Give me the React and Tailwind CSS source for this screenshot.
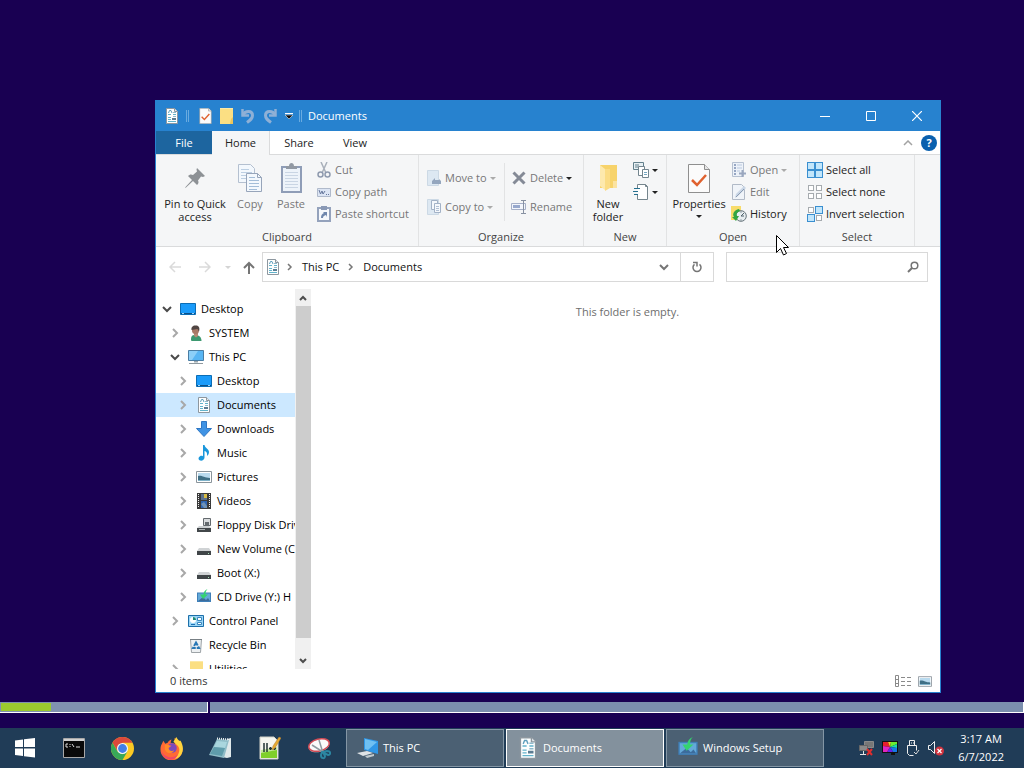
function Svg({ w = 16, h = 16, box, children }) {
  return (
    <svg width={w} height={h} viewBox={box || `0 0 ${w} ${h}`} fill="none" className="shrink-0" aria-hidden="true">
      {children}
    </svg>
  );
}

/* SMALL ICONS */

function DocumentIcon({ w = 16, h = 16 }) {
  return (
    <Svg w={w} h={h} box="0 0 16 16">
      <path d="M2.5.5h8l3 3v12h-11z" fill="#fdfefe" stroke="#8d979f" />
      <path d="M10.5.5v3h3" fill="#e4e9ed" stroke="#8d979f" />
      <path d="M4 6.500h3M9 6.500h3M4 9.500h3M4 11.500h3M4 13.500h8" stroke="#62b3cc" />
      <path d="M4.500 5l1-2.500H7L8 5" stroke="#5f9fbd" />
      <path d="M9 4.500h3M9 8.500h3" stroke="#8fb9cc" />
      <path d="M8 10h4v2H8z" fill="#5b7c92" />
    </Svg>
  );
}

function CheckPageIcon({ w = 13, h = 16 }) {
  return (
    <Svg w={w} h={h} box="0 0 22 29">
      <path d="M.5.5h16l5 5v23H.5z" fill="#fbfbfb" stroke="#8f8f8f" />
      <path d="M16.500.5v5h5" fill="#e6e6e6" stroke="#8f8f8f" />
      <path d="M4 16l5 5 9-10" stroke="#e0622f" strokeWidth="2.500" />
    </Svg>
  );
}

function FolderIcon({ w = 13, h = 16 }) {
  return (
    <Svg w={w} h={h} box="0 0 13 16">
      <path d="M0 0h13v16H0z" fill="#fbdf83" />
      <path d="M0 0h13v1H0z" fill="#fce9a8" />
      <path d="M11 11l2-2v7h-3z" fill="#ecc55c" />
    </Svg>
  );
}

function UndoIcon() {
  return (
    <Svg w={14} h={16}>
      <path d="M1.500 1v6.500H8" stroke="#8fb0d6" strokeWidth="2.500" />
      <path d="M2 7C4 2.500 11.500 2 11.500 7.500c0 3-2 4.500-5.500 7" stroke="#8fb0d6" strokeWidth="3" />
    </Svg>
  );
}

function RedoIcon() {
  return (
    <Svg w={14} h={16}>
      <path d="M12.500 1v6.500H6" stroke="#8fb0d6" strokeWidth="2.500" />
      <path d="M12 7C10 2.500 2.500 2 2.500 7.500c0 3 2 4.500 5.500 7" stroke="#8fb0d6" strokeWidth="3" />
    </Svg>
  );
}

function MonitorIcon() {
  return (
    <Svg>
      <path d="M.5 2.500h15v11H.5z" fill="#1a9bfa" stroke="#0b6db5" />
      <path d="M1 12.500h14" stroke="#0c4f86" />
      <path d="M2 12.500h2M12 12.500h2" stroke="#9fd4f7" />
    </Svg>
  );
}

function UserIcon() {
  return (
    <Svg>
      <path d="M3 15c0-4 1-5 4-5 4 0 6.500 2 6.500 6H5c-1 0-2 0-2-1z" fill="#3d9970" />
      <path d="M6 8h4v3l-2 1.500L6 11z" fill="#b58a74" />
      <circle cx="7.500" cy="5.500" r="3.500" fill="#a87966" />
      <path d="M3.500 5C3 1.500 5.500 0 8 .5c3 0 4 2.500 3 6L9.500 4z" fill="#514643" />
    </Svg>
  );
}

function ComputerIcon() {
  return (
    <Svg>
      <path d="M.5 1.500h15v10H.5z" fill="#58b5f3" stroke="#4a7da3" />
      <path d="M1 2h9L4 11H1z" fill="#8ccff8" />
      <path d="M6 12h4v1.500H6z" fill="#9aa6ad" />
      <path d="M1 14.500h14" stroke="#8f999f" />
    </Svg>
  );
}

function DownloadIcon() {
  return (
    <Svg>
      <path d="M5.500.5h5v7h5L8 15.500.5 7.500h5z" fill="#3f93e4" stroke="#2f77c4" />
    </Svg>
  );
}

function MusicIcon() {
  return (
    <Svg>
      <path d="M7 0h1.500c.5 3 4.500 4 4.500 7 0 2-1 3-2 4 .5-3-.5-4.500-2.500-5v6.500C8.500 15 6 16 4 15.500c-2-.8-2-3.500 0-4.300 1-.5 2-.4 3 0z" fill="#1a97dc" />
    </Svg>
  );
}

function PictureIcon({ w = 16, h = 12 }) {
  return (
    <Svg w={w} h={h} box="0 0 16 12">
      <path d="M.5.5h15v11H.5z" fill="#fff" stroke="#8a949b" />
      <path d="M2 2h12v8H2z" fill="#b9daee" />
      <path d="M2 9V5c4-1 6 2 12 2v2z" fill="#3f6f85" />
      <path d="M2 9h12v1H2z" fill="#7fb2c9" />
    </Svg>
  );
}

function VideoIcon() {
  return (
    <Svg>
      <path d="M1 0h14v16H1z" fill="#3a3a3a" />
      <path d="M5 1h6v6H5z" fill="#5c718c" />
      <path d="M5 8h6v7H5z" fill="#2d65b4" />
      <path d="M8 1h3v4H8z" fill="#d9bd45" />
      <path d="M5 11l3-2 3 4v2H8z" fill="#7092b5" />
      <path d="M2.500 1v14M13.500 1v14" stroke="#f2f2f2" strokeDasharray="1 1" />
    </Svg>
  );
}

function FloppyDriveIcon() {
  return (
    <Svg>
      <path d="M7.500 1.500h7v7h-7z" fill="#d8dbdd" stroke="#646a6e" />
      <path d="M9 5h4v3H9z" fill="#646a6e" />
      <path d="M3 9h10l2 2H1z" fill="#ccd0d2" />
      <path d="M1 11h14v4H1z" fill="#42474a" />
      <path d="M3 12.500h6" stroke="#aab0b2" />
    </Svg>
  );
}

function DriveIcon() {
  return (
    <Svg>
      <path d="M3 7h10l2 3H1z" fill="#d0d3d5" />
      <path d="M1 10h14v4H1z" fill="#404548" />
      <path d="M12 12h1v1h-1z" fill="#a6e4b5" />
    </Svg>
  );
}

function SetupIcon({ w = 16, h = 16 }) {
  return (
    <Svg w={w} h={h} box="0 0 16 16">
      <path d="M1 3.500h14v9.500H1z" fill="#3f7fb8" />
      <path d="M2 4.500h12v7.500H2z" fill="#63a9d8" />
      <path d="M2 12l5-4 3 3 2-2 2 3z" fill="#3c6c9c" />
      <path d="M11.500 0C9 1 7.500 3 7.500 5.500H4L7 10l5-4.500H9.500C9.500 3 10 1.500 11.500 0z" fill="#34d36f" />
    </Svg>
  );
}

function ControlPanelIcon() {
  return (
    <Svg>
      <path d="M.5 2.500h15v11H.5z" fill="#9ad5f6" stroke="#1d6fa9" />
      <circle cx="5" cy="7" r="3" fill="#fff" />
      <path d="M5 4v3h3a3 3 0 00-3-3z" fill="#1e8a75" />
      <path d="M9.500 4.500h4v3h-4zM9.500 9.500h4v2h-4z" fill="#fff" stroke="#3a87bf" />
      <path d="M3 11.500h4" stroke="#1e70b1" />
    </Svg>
  );
}

function RecycleIcon() {
  return (
    <Svg>
      <path d="M2.500 2.500h11l-1 13h-9z" fill="#edf0f2" stroke="#9da3a7" />
      <path d="M2 2.500h12" stroke="#777f84" />
      <path d="M8 5.500L5 11h6z" stroke="#2877b5" strokeWidth="2" strokeDasharray="4 1" />
    </Svg>
  );
}

function Chevron({ open }) {
  return (
    <Svg w={10} h={10}>
      <path d={open ? "M1 3l4 4 4-4" : "M3 1l4 4-4 4"} stroke={open ? "#4a4a4a" : "#a8a8a8"} strokeWidth="2" />
    </Svg>
  );
}

function Caret({ light }) {
  return (
    <Svg w={6} h={3}>
      <path d="M0 0h6L3 3z" fill={light ? "#aaa" : "#222"} />
    </Svg>
  );
}

/* RIBBON ICONS */

function PinIcon() {
  return (
    <Svg w={22} h={22}>
      <path d="M13 1l8 8-2 1-2-.5-3 4c1 2 .5 3-1 4.500L9 14l-7 6.500L1 21l.5-1L8 13 4 9c1.500-1.500 3-2 5-1l4-3.500-.5-2z" fill="#8d9195" />
    </Svg>
  );
}

function CopyIcon() {
  return (
    <Svg w={25} h={29}>
      <path d="M.5.5h12l4 4v14H.5z" fill="#f3f8fd" stroke="#b4c0d0" />
      <path d="M3 5.500h8M3 8.500h11M3 11.500h11M3 14.500h5" stroke="#bccfe3" />
      <path d="M8.500 9.500h11l4 4v14h-15z" fill="#f3f8fd" stroke="#97a5ba" />
      <path d="M19.500 9.500v4h4" stroke="#97a5ba" />
      <path d="M11 13.500h6M11 16.500h10M11 19.500h10M11 22.500h10M11 25.500h8" stroke="#a3bdd8" />
    </Svg>
  );
}

function PasteIcon() {
  return (
    <Svg w={21} h={30}>
      <path d="M1 4h19v25H1z" fill="#edf3fa" stroke="#8f9db7" strokeWidth="2" />
      <path d="M5 3h3c0-4 5-4 5 0h3v3H5z" fill="#9299a3" />
      <path d="M4 9.500h13M4 12.500h13M4 15.500h13M4 18.500h13M4 21.500h13M4 24.500h13" stroke="#c9d5e4" />
    </Svg>
  );
}

function CutIcon() {
  return (
    <Svg w={14} h={16}>
      <path d="M4 0l5 11M10 0L5 11" stroke="#a9b0ba" strokeWidth="1.500" />
      <circle cx="3.500" cy="12.500" r="2.500" stroke="#8f9aae" strokeWidth="1.500" />
      <circle cx="10.500" cy="12.500" r="2.500" stroke="#8f9aae" strokeWidth="1.500" />
    </Svg>
  );
}

function PathIcon() {
  return (
    <Svg w={14} h={9}>
      <path d="M.5.5h13v8H.5z" fill="#dce5f4" stroke="#b0bacb" />
      <path d="M2 2l1.500 4L5 3l1 3 2-3M9 6.500h1M11 6.500h1" stroke="#66779c" />
    </Svg>
  );
}

function ShortcutIcon() {
  return (
    <Svg w={14} h={16}>
      <path d="M1 2h12v13H1z" fill="#f5f8fc" stroke="#94a2bc" strokeWidth="2" />
      <path d="M4 0h6v4H4z" fill="#8a99b5" />
      <path d="M4 12c0-3 1-4 3-5L6 6h4v5L9 9c-2 1-3 1-3 3z" fill="#6f87ad" />
    </Svg>
  );
}

function MoveIcon({ copy }) {
  return (
    <Svg w={14} h={16}>
      <path d="M.5.5h11v15H.5z" fill="#dde8f2" stroke="#ccd9e5" />
      {copy ? (
        <>
          <path d="M4.500 1.500h6v9h-6z" fill="#f5f8fc" stroke="#a3b2c7" />
          <path d="M7.500 4.500h6v9h-6z" fill="#f5f8fc" stroke="#a3b2c7" />
          <path d="M9 7.500h3M9 9.500h3M9 11.500h3" stroke="#b1c0d4" />
        </>
      ) : (
        <path d="M5 14v-3l3-3v2h4v-1l2 2v3z" fill="#94a6be" />
      )}
    </Svg>
  );
}

function DeleteIcon() {
  return (
    <Svg w={14} h={14}>
      <path d="M1.500 1.500l11 11M12.500 1.500l-11 11" stroke="#848a96" strokeWidth="3" />
    </Svg>
  );
}

function RenameIcon() {
  return (
    <Svg w={16} h={16}>
      <path d="M.5 4.500h14v6H.5z" fill="#f3f6fc" stroke="#a6b0c8" />
      <path d="M2 6h7v3H2z" fill="#97a8cd" />
      <path d="M10 1.500h5M12.500 1.500v13M10 14.500h5" stroke="#8791a2" />
    </Svg>
  );
}

function NewFolderIcon() {
  return (
    <Svg w={18} h={28}>
      <path d="M1 1h17v23H1z" fill="#f7d36b" />
      <path d="M1 1l5 4v21l-5-4z" fill="#fde9ad" />
      <path d="M6 5h5v19l-5 3z" fill="#fbdc84" />
      <path d="M14 17h4v7h-4z" fill="#fbe3a1" />
    </Svg>
  );
}

function NewItemIcon() {
  return (
    <Svg w={16} h={16}>
      <path d="M.5.5h10v7H.5z" fill="#e8f0f4" stroke="#63808c" />
      <path d="M2 3h4M2 5h3" stroke="#63808c" />
      <path d="M5.500 4.500h6v9h-6z" fill="#fff" stroke="#73858e" />
      <path d="M9.500 7.500h6v8h-6z" fill="#fff" stroke="#73858e" />
      <path d="M11 10.500h3M11 12.500h3" stroke="#75a6c0" />
    </Svg>
  );
}

function EasyAccessIcon() {
  return (
    <Svg w={16} h={16}>
      <path d="M4.500 4V.5h8l2 2v13h-10V10" fill="#fff" stroke="#75858d" />
      <path d="M12.500.5v2h2" stroke="#75858d" />
      <path d="M1 4.500h6M0 7.500h5M1 10.500h4" stroke="#26708f" />
    </Svg>
  );
}

function OpenIcon() {
  return (
    <Svg w={14} h={16}>
      <path d="M.5.5h11v14H.5z" fill="#edf2f9" stroke="#b6c1d1" />
      <path d="M2 3h2M2 6h2M2 9h2M2 12h2" stroke="#97a7c4" strokeWidth="2" />
      <path d="M5 3h5M5 6h5M5 9h3" stroke="#bac9df" />
      <path d="M10.500 8v7M7 11.500h7" stroke="#9aa7bf" strokeWidth="2" />
    </Svg>
  );
}

function EditIcon() {
  return (
    <Svg w={14} h={16}>
      <path d="M.5.5h9l3 3v12H.5z" fill="#f0f4f9" stroke="#b1bac7" />
      <path d="M3 14l1-4 8-8 2 2-8 8z" fill="#c9d6e6" />
      <path d="M4 13l8-8" stroke="#8b9cb3" />
    </Svg>
  );
}

function HistoryIcon() {
  return (
    <Svg w={16} h={16}>
      <path d="M0 0h10v14H0z" fill="#f8dc6b" />
      <circle cx="10" cy="10" r="5.300" fill="#e7edf0" stroke="#67757c" />
      <path d="M10 10l3-3M10 10h3M10 5.500v1M10 13.500v1" stroke="#51636c" />
      <path d="M8 3C3 4 1 8 3 11H1l4 4 3-5H6C5 8 6 6 9 5z" fill="#32a642" />
    </Svg>
  );
}

// filled lists which of the four squares are selected
function SquaresIcon({ filled }) {
  const cells = [[0, 0], [8, 0], [0, 8], [8, 8]];
  return (
    <Svg>
      {cells.map(([x, y], i) => {
        const on = filled.includes(i);
        const pad = on ? 0.5 : 1.5;
        return (
          <rect
            key={i}
            x={x + pad}
            y={y + pad}
            width={on ? 7 : 5}
            height={on ? 7 : 5}
            fill={on ? "#c2e6fb" : "#fff"}
            stroke={on ? "#3a8fd0" : "#a6abaf"}
          />
        );
      })}
    </Svg>
  );
}

/* RIBBON PARTS */

function BigButton({ icon, label, width, faded, caret }) {
  return (
    <button className={`flex flex-col items-center pt-[7px] leading-[13px] ${width} ${faded ? "text-[#777]" : "text-[#222]"}`}>
      <span className="mb-[3px] flex h-8 items-center">{icon}</span>
      <span>{label}</span>
      {caret && <span className="flex h-3 items-center"><Caret /></span>}
    </button>
  );
}

function SmallButton({ icon, label, faded, caret }) {
  return (
    <button className={`flex h-[22px] items-center gap-[3px] whitespace-nowrap ${faded ? "text-[#777]" : "text-[#222]"}`}>
      <span className="flex w-4 justify-center">{icon}</span>
      {label && <span>{label}</span>}
      {caret && <Caret light={caret === "light"} />}
    </button>
  );
}

function Group({ title, width, children }) {
  return (
    <section className={`flex shrink-0 flex-col border-r border-[#e2e3e4] ${width}`}>
      <div className="flex h-[74px]">{children}</div>
      <h2 className="text-center leading-4 text-[#444]">{title}</h2>
    </section>
  );
}

function Ribbon() {
  return (
    <div className="flex h-[92px] shrink-0 overflow-hidden border-b border-[#dadbdc] bg-[#f5f6f7]">
      <Group title="Clipboard" width="w-[263px]">
        <BigButton width="w-[78px]" icon={<PinIcon />} label={<>Pin to Quick<br />access</>} />
        <BigButton width="w-8" icon={<CopyIcon />} label="Copy" faded />
        <BigButton width="w-[50px]" icon={<PasteIcon />} label="Paste" faded />
        <div className="flex flex-col pt-1">
          <SmallButton icon={<CutIcon />} label="Cut" faded />
          <SmallButton icon={<PathIcon />} label="Copy path" faded />
          <SmallButton icon={<ShortcutIcon />} label="Paste shortcut" faded />
        </div>
      </Group>
      <Group title="Organize" width="w-[165px]">
        <div className="my-2 flex w-[86px] flex-col gap-[7px] border-r border-[#e2e3e4] pt-1 pl-[7px]">
          <SmallButton icon={<MoveIcon />} label="Move to" faded caret="light" />
          <SmallButton icon={<MoveIcon copy />} label="Copy to" faded caret="light" />
        </div>
        <div className="my-2 flex flex-col gap-[7px] pt-1 pl-[6px]">
          <SmallButton icon={<DeleteIcon />} label="Delete" faded caret="dark" />
          <SmallButton icon={<RenameIcon />} label="Rename" faded />
        </div>
      </Group>
      <Group title="New" width="w-[83px]">
        <BigButton width="w-12" icon={<NewFolderIcon />} label={<>New<br />folder</>} />
        <div className="flex flex-col pt-1 pl-px">
          <SmallButton icon={<NewItemIcon />} caret="dark" />
          <SmallButton icon={<EasyAccessIcon />} caret="dark" />
        </div>
      </Group>
      <Group title="Open" width="w-[133px]">
        <BigButton width="w-16" icon={<CheckPageIcon w={22} h={29} />} label="Properties" caret />
        <div className="flex flex-col pt-1">
          <SmallButton icon={<OpenIcon />} label="Open" faded caret="light" />
          <SmallButton icon={<EditIcon />} label="Edit" faded />
          <SmallButton icon={<HistoryIcon />} label="History" />
        </div>
      </Group>
      <Group title="Select" width="w-[115px]">
        <div className="flex flex-col pt-1 pl-[7px]">
          <SmallButton icon={<SquaresIcon filled={[0, 1, 2, 3]} />} label="Select all" />
          <SmallButton icon={<SquaresIcon filled={[]} />} label="Select none" />
          <SmallButton icon={<SquaresIcon filled={[1, 2]} />} label="Invert selection" />
        </div>
      </Group>
    </div>
  );
}

/* WINDOW PARTS */

function TitleDivider() {
  return <span className="h-3 w-[3px] border-x border-[#69abe0]" />;
}

function TitleBar() {
  return (
    <header className="flex h-[30px] shrink-0 items-center bg-[#2782cf] text-white">
      <div className="flex flex-1 items-center pl-2">
        <DocumentIcon />
        <span className="ml-[6px] flex"><TitleDivider /></span>
        <button aria-label="Properties" className="ml-[10px]"><CheckPageIcon /></button>
        <button aria-label="New folder" className="ml-2"><FolderIcon /></button>
        <button aria-label="Undo" className="ml-2"><UndoIcon /></button>
        <button aria-label="Redo" className="ml-2"><RedoIcon /></button>
        <button aria-label="Customize toolbar" className="ml-2">
          <Svg w={8} h={8}>
            <path d="M0 1.500h8" stroke="#fff" />
            <path d="M0 3h8L4 7z" fill="#111" stroke="#fff" strokeWidth=".5" />
          </Svg>
        </button>
        <span className="mr-[6px] ml-[6px] flex"><TitleDivider /></span>
        <h1>Documents</h1>
      </div>
      <button aria-label="Minimize" className="flex w-[46px] justify-center">
        <Svg w={10} h={10}><path d="M0 5.500h10" stroke="#fff" /></Svg>
      </button>
      <button aria-label="Maximize" className="flex w-[46px] justify-center">
        <Svg w={10} h={10}><path d="M.5.5h9v9h-9z" stroke="#fff" /></Svg>
      </button>
      <button aria-label="Close" className="flex w-[46px] justify-center">
        <Svg w={10} h={10}><path d="M0 0l10 10M10 0L0 10" stroke="#fff" strokeWidth="1.200" /></Svg>
      </button>
    </header>
  );
}

function TabBar() {
  return (
    <nav className="flex h-6 shrink-0 border-b border-[#dadbdc] bg-white text-[#222]">
      <button className="w-14 bg-[#1d659f] pt-px text-white">File</button>
      <button className="-mb-px w-[58px] border-r border-[#dadbdc] bg-[#f5f6f7]">Home</button>
      <button className="w-[58px] pt-px">Share</button>
      <button className="w-[54px] pt-px">View</button>
      <div className="ml-auto flex items-center gap-2 pr-[3px]">
        <button aria-label="Collapse ribbon">
          <Svg w={10} h={6}><path d="M1 5l4-4 4 4" stroke="#a3a3a3" strokeWidth="1.500" /></Svg>
        </button>
        <button aria-label="Help" className="h-4 w-4 rounded-full bg-[#0a60ae] font-bold leading-4 text-white">?</button>
      </div>
    </nav>
  );
}

function AddressRow() {
  return (
    <div className="flex h-[42px] shrink-0 items-start pt-[5px] pr-3 pl-1 text-[#111]">
      <button aria-label="Back" className="flex h-[30px] w-[30px] items-center justify-center">
        <Svg w={12} h={12}><path d="M12 6H1M6 1L1 6l5 5" stroke="#dadada" strokeWidth="1.500" /></Svg>
      </button>
      <button aria-label="Forward" className="flex h-[30px] w-[30px] items-center justify-center">
        <Svg w={12} h={12}><path d="M0 6h11M6 1l5 5-5 5" stroke="#dadada" strokeWidth="1.500" /></Svg>
      </button>
      <button aria-label="Recent locations" className="flex h-[30px] w-4 items-center justify-center">
        <Svg w={6} h={3}><path d="M0 0h6L3 3z" fill="#d4d4d4" /></Svg>
      </button>
      <button aria-label="Up" className="flex h-[30px] w-[26px] items-center justify-center">
        <Svg w={12} h={13}><path d="M6 13V2M1 7l5-5 5 5" stroke="#757575" strokeWidth="2" /></Svg>
      </button>
      <div className="flex h-[30px] flex-1 items-center border border-[#d9d9d9] bg-white pl-[2px]">
        <DocumentIcon />
        <span className="ml-[5px]"><Svg w={8} h={8}><path d="M2 1l3 3-3 3" stroke="#777" strokeWidth="1.500" /></Svg></span>
        <button className="ml-2">This PC</button>
        <span className="ml-2"><Svg w={8} h={8}><path d="M2 1l3 3-3 3" stroke="#777" strokeWidth="1.500" /></Svg></span>
        <button className="ml-2">Documents</button>
        <button aria-label="Previous locations" className="ml-auto flex h-full w-8 items-center justify-center">
          <Svg w={10} h={7}><path d="M1 1l4 4 4-4" stroke="#757575" strokeWidth="2" /></Svg>
        </button>
        <button aria-label="Refresh" className="flex h-full w-[33px] items-center justify-center border-l border-[#d9d9d9]">
          <Svg w={12} h={12}>
            <path d="M8.500 3.300A4 4 0 113.500 3.300" stroke="#757575" strokeWidth="1.500" />
            <path d="M2 1.500h4v4" stroke="#757575" strokeWidth="1.500" />
          </Svg>
        </button>
      </div>
      <form className="ml-3 flex h-[30px] w-[202px] items-center border border-[#d9d9d9] bg-white pr-2">
        <input type="text" aria-label="Search Documents" className="min-w-0 flex-1 px-2 outline-none" />
        <button type="button" aria-label="Search">
          <Svg w={12} h={12}>
            <circle cx="7.500" cy="4.500" r="3.300" stroke="#757575" strokeWidth="1.500" />
            <path d="M5 7l-4 4" stroke="#757575" strokeWidth="2" />
          </Svg>
        </button>
      </form>
    </div>
  );
}

const tree = [
  { name: "Desktop", level: 0, icon: <MonitorIcon />, state: "open" },
  { name: "SYSTEM", level: 1, icon: <UserIcon />, state: "closed" },
  { name: "This PC", level: 1, icon: <ComputerIcon />, state: "open" },
  { name: "Desktop", level: 2, icon: <MonitorIcon />, state: "closed" },
  { name: "Documents", level: 2, icon: <DocumentIcon />, state: "closed", selected: true },
  { name: "Downloads", level: 2, icon: <DownloadIcon />, state: "closed" },
  { name: "Music", level: 2, icon: <MusicIcon />, state: "closed" },
  { name: "Pictures", level: 2, icon: <PictureIcon />, state: "closed" },
  { name: "Videos", level: 2, icon: <VideoIcon />, state: "closed" },
  { name: "Floppy Disk Drive", level: 2, icon: <FloppyDriveIcon />, state: "closed" },
  { name: "New Volume (C:)", level: 2, icon: <DriveIcon />, state: "closed" },
  { name: "Boot (X:)", level: 2, icon: <DriveIcon />, state: "closed" },
  { name: "CD Drive (Y:) H", level: 2, icon: <SetupIcon />, state: "closed" },
  { name: "Control Panel", level: 1, icon: <ControlPanelIcon />, state: "closed" },
  { name: "Recycle Bin", level: 1, icon: <RecycleIcon />, state: "none" },
  { name: "Utilities", level: 1, icon: <FolderIcon />, state: "closed" },
];

const indent = ["pl-[3px]", "pl-[11px]", "pl-[19px]"];

function Sidebar() {
  return (
    <aside className="flex w-[155px] shrink-0">
      <ul className="w-[139px] overflow-hidden pt-2 text-black">
        {tree.map((item) => (
          <li key={item.level + item.name}>
            <button className={`flex h-6 w-full items-center whitespace-nowrap ${indent[item.level]} ${item.selected ? "bg-[#cce8ff]" : ""}`}>
              <span className="flex w-4 shrink-0 justify-center">
                {item.state !== "none" && <Chevron open={item.state === "open"} />}
              </span>
              <span className="mr-[5px] ml-[5px] flex w-4 shrink-0 justify-center">{item.icon}</span>
              {item.name}
            </button>
          </li>
        ))}
      </ul>
      <div className="flex w-4 flex-col bg-[#f0f0f0]">
        <button aria-label="Scroll up" className="flex h-[17px] items-center justify-center">
          <Svg w={8} h={6}><path d="M1 5l3-3 3 3" stroke="#4d4d4d" strokeWidth="2" /></Svg>
        </button>
        <div className="ml-px flex-1 bg-[#cdcdcd]" />
        <button aria-label="Scroll down" className="flex h-[31px] items-center justify-center pt-[14px]">
          <Svg w={8} h={6}><path d="M1 1l3 3 3-3" stroke="#4d4d4d" strokeWidth="2" /></Svg>
        </button>
      </div>
    </aside>
  );
}

function StatusBar() {
  return (
    <footer className="flex h-[23px] shrink-0 items-center justify-between pt-px pr-2 pl-[14px] text-[#333]">
      <span>0 items</span>
      <div className="flex items-center gap-[7px]">
        <button aria-label="Details view">
          <Svg w={16} h={12}>
            <path d="M.5.5h3v11h-3zM.5 4.500h3M.5 8.500h3" stroke="#8a8a8a" />
            <path d="M6 2.500h4M12 2.500h4M6 6.500h4M12 6.500h4M6 10.500h4M12 10.500h4" stroke="#8a8a8a" />
          </Svg>
        </button>
        <button aria-label="Large icons view"><PictureIcon w={14} h={11} /></button>
      </div>
    </footer>
  );
}

function Explorer() {
  return (
    <main className="flex min-h-0 min-w-0 flex-1 flex-col border border-[#2782cf] bg-white">
      <TitleBar />
      <TabBar />
      <Ribbon />
      <AddressRow />
      <div className="flex min-h-0 flex-1">
        <Sidebar />
        <p className="flex-1 pt-[15px] pl-1 text-center leading-4 text-[#6d6d6d]">This folder is empty.</p>
      </div>
      <StatusBar />
    </main>
  );
}

/* TASKBAR */

function StartIcon() {
  return (
    <Svg w={22} h={22}>
      <path d="M1 3.500l8-1V10H1zM10 2.300L21 1v9H10zM1 11.500h8V19l-8-1zM10 11.500h11v9l-11-1.300z" fill="#fff" />
    </Svg>
  );
}

function TerminalIcon() {
  return (
    <Svg w={22} h={20}>
      <path d="M.5.5h21v19H.5z" fill="#090909" stroke="#a8a8a8" />
      <path d="M1 2h20" stroke="#d0d0d0" strokeWidth="2" />
      <path d="M5 6H3v3h2M7 6v1M7 8v1M9 6l2 3M13 9h4" stroke="#ddd" />
    </Svg>
  );
}

function ChromeIcon() {
  return (
    <Svg w={23} h={23} box="0 0 24 24">
      <circle cx="12" cy="12" r="12" fill="#fbc923" />
      <path d="M1.600 6A12 12 0 0122.400 6H12L7 15z" fill="#dc493c" />
      <path d="M1.600 6A12 12 0 0012 24l5.200-9-5.200 3-5.200-3z" fill="#38a858" />
      <circle cx="12" cy="12" r="5.800" fill="#f4f4f4" />
      <circle cx="12" cy="12" r="4.600" fill="#427fe8" />
    </Svg>
  );
}

function FirefoxIcon() {
  return (
    <Svg w={23} h={23} box="0 0 24 24">
      <path d="M2 7l1.500-3 2 3L8 6c1-2 2-3 4-3.500L11 6l5 1-1-6c5 3 8.500 7 8.500 12A11.500 11.500 0 01.5 13C.5 10 1 9 2 7z" fill="#ff6a35" />
      <path d="M14 5l3-5c1 2 2 3 3 4l1.500 0c2 4 3 7 2 11-1 4-4 7-8 8 5-5 6-11 3-14z" fill="#ffd43d" />
      <path d="M1 14c4 8 12 9 18 4-2 4-6 6.500-9 5.500-5-1-8-5-9-9.500z" fill="#ef4868" />
      <circle cx="12.500" cy="11.500" r="5" fill="#7b49bb" />
      <path d="M5 8c3-1 4 1 7 1l-3 2.500c0 3 4 4 6 2-2 5-10 4-10-2z" fill="#ff8b28" />
    </Svg>
  );
}

function NotepadIcon() {
  return (
    <Svg w={23} h={22}>
      <path d="M18 2l4-1v19l-4 1-5-1z" fill="#dfe8ea" />
      <path d="M8 2l12 1-5 18L0 18z" fill="#8fbcc7" />
      <path d="M8 4l10 1-2 6-11-1z" fill="#a9d6de" />
      <path d="M5 10l11 1-3 8-12-2z" fill="#5f9cab" />
      <path d="M8 1.500l12 1" stroke="#e8eeef" strokeWidth="2" strokeDasharray="1 1" />
    </Svg>
  );
}

function EditorIcon() {
  return (
    <Svg w={22} h={24}>
      <path d="M1 1h14l4 4v18H1z" fill="#f6f6ef" stroke="#d0d0c8" />
      <path d="M2 16l16-3v9H2z" fill="#7fcf2a" />
      <path d="M2 14l16-3v3L2 17z" fill="#c3e99a" />
      <path d="M5 7v9M8 7v9M10 12.500h3M11.500 11v3M14 12.500h3M15.500 11v3" stroke="#233" strokeWidth="1.500" />
      <path d="M13 14l1-4 6-9 2 1-6 10z" fill="#e7ab32" stroke="#b07a30" strokeWidth=".5" />
    </Svg>
  );
}

function SnipIcon() {
  return (
    <Svg w={24} h={23}>
      <ellipse cx="12" cy="9" rx="10.500" ry="6" fill="#c9ced2" transform="rotate(-14 12 9)" />
      <ellipse cx="12" cy="8" rx="10.500" ry="6" fill="#fafafa" stroke="#d34b55" strokeWidth="1.500" transform="rotate(-14 12 8)" />
      <path d="M5 8l11 7M12 3l4 13" stroke="#8f9aa1" strokeWidth="1.500" />
      <path d="M16 15l4-1c4 0 4 4 1 4l-4-2zM15 15l-1 3c0 4 4 4 4 1l-2-4z" stroke="#2c86a2" strokeWidth="2" />
    </Svg>
  );
}

function LaptopIcon() {
  return (
    <Svg w={22} h={22}>
      <path d="M7 1l14 3v13L7 13z" fill="#2f96e6" />
      <path d="M8 2l12 3-9 8-3-1z" fill="#6fc0f2" />
      <path d="M0 16l10-2 6 2-10 3z" fill="#dfe3e6" />
      <path d="M8 19l9-2v2l-7 2z" fill="#c0c9ce" />
    </Svg>
  );
}

function NetworkIcon() {
  return (
    <Svg w={16} h={16}>
      <path d="M6.500 1.500h9v6h-9z" fill="#777" stroke="#8a8a8a" />
      <path d="M1.500 5.500h8v5h-8z" fill="#8a8a8a" stroke="#666" />
      <path d="M5.500 11v3M2 14.500h6" stroke="#e4e4e4" />
      <path d="M9 9l5 6M14 9l-5 6" stroke="#e02d2d" strokeWidth="2" />
    </Svg>
  );
}

function DisplayIcon() {
  return (
    <Svg w={16} h={16}>
      <path d="M0 1h16v12H0zM9 13h4v2H9z" fill="#111" />
      <path d="M1 2h5l2 5-7-1z" fill="#e71f2b" />
      <path d="M6 2h3L8 7z" fill="#f9c725" />
      <path d="M9 2h6v2L8 7z" fill="#6bed30" />
      <path d="M15 4v4L8 7z" fill="#17d8ad" />
      <path d="M15 8v4h-4L8 7z" fill="#1678e7" />
      <path d="M11 12H5l3-5z" fill="#6a25e7" />
      <path d="M5 12H1V6l7 1z" fill="#e025c0" />
    </Svg>
  );
}

function UsbIcon() {
  return (
    <Svg w={14} h={16}>
      <path d="M3.500 5.500v-5h5v5M1.500 5.500h9v5M1.500 5.500v8l2 2h4M5 3h1M7 3h1" stroke="#eee" />
      <path d="M8 12l2 2 3-4" stroke="#ddd" />
    </Svg>
  );
}

function VolumeIcon() {
  return (
    <Svg w={16} h={16}>
      <path d="M.5 5.500h2l4-4v12l-4-4h-2z" stroke="#eee" />
      <circle cx="11.500" cy="11" r="4.500" fill="#cf333e" />
      <path d="M9.500 9l4 4M13.500 9l-4 4" stroke="#fff" strokeWidth="1.200" />
    </Svg>
  );
}

const launchers = [
  { name: "Start", icon: <StartIcon /> },
  { name: "Command Prompt", icon: <TerminalIcon /> },
  { name: "Chrome", icon: <ChromeIcon /> },
  { name: "Firefox", icon: <FirefoxIcon /> },
  { name: "Notepad", icon: <NotepadIcon /> },
  { name: "Text editor", icon: <EditorIcon /> },
  { name: "Snipping Tool", icon: <SnipIcon /> },
];

const tasks = [
  { name: "This PC", icon: <LaptopIcon /> },
  { name: "Documents", icon: <DocumentIcon w={22} h={22} />, active: true },
  { name: "Windows Setup", icon: <SetupIcon w={22} h={22} /> },
];

function Taskbar() {
  return (
    <footer className="flex h-10 shrink-0 items-center bg-[#203c57] text-white">
      {launchers.map((app) => (
        <button key={app.name} aria-label={app.name} className="flex w-[49px] justify-center">{app.icon}</button>
      ))}
      <div className="ml-[3px] flex gap-[2px]">
        {tasks.map((task) => (
          <button
            key={task.name}
            className={`flex h-[38px] w-[158px] items-center gap-1 border pl-[10px] ${task.active ? "border-white bg-[#83919d]" : "border-[#8496a5] bg-[#4b6073]"}`}
          >
            {task.icon}
            {task.name}
          </button>
        ))}
      </div>
      <div className="ml-auto flex items-center gap-2 pr-5">
        <button aria-label="Network"><NetworkIcon /></button>
        <button aria-label="Display"><DisplayIcon /></button>
        <button aria-label="Eject hardware"><UsbIcon /></button>
        <button aria-label="Volume"><VolumeIcon /></button>
        <time className="ml-[6px] text-center leading-[18px]">3:17 AM<br />6/7/2022</time>
      </div>
    </footer>
  );
}

export default function App() {
  return (
    <div className="relative flex h-screen flex-col overflow-hidden bg-[#190052] font-['Open_Sans',sans-serif] text-[11px]">
      <div className="flex min-h-0 flex-1 pt-[100px] pr-[83px] pl-[155px]">
        <Explorer />
      </div>

      {/* PROGRESS BARS */}
      <div className="mt-[9px] mb-[15px] flex h-[11px] shrink-0 gap-[2px]">
        <div className="w-52 border-r border-b border-white bg-[#8092b0] p-px">
          <div className="h-full w-[50px] bg-[#9bca2e]" />
        </div>
        <div className="flex-1 border-r border-b border-white bg-[#7b8fae]" />
      </div>

      <Taskbar />

      {/* MOUSE POINTER */}
      <div className="pointer-events-none absolute top-[235px] left-[776px]">
        <Svg w={13} h={21}>
          <path d="M.5.5v17l4-4 3 6.500 3-1.500-3-6h5z" fill="#fff" stroke="#000" />
        </Svg>
      </div>
    </div>
  );
}
